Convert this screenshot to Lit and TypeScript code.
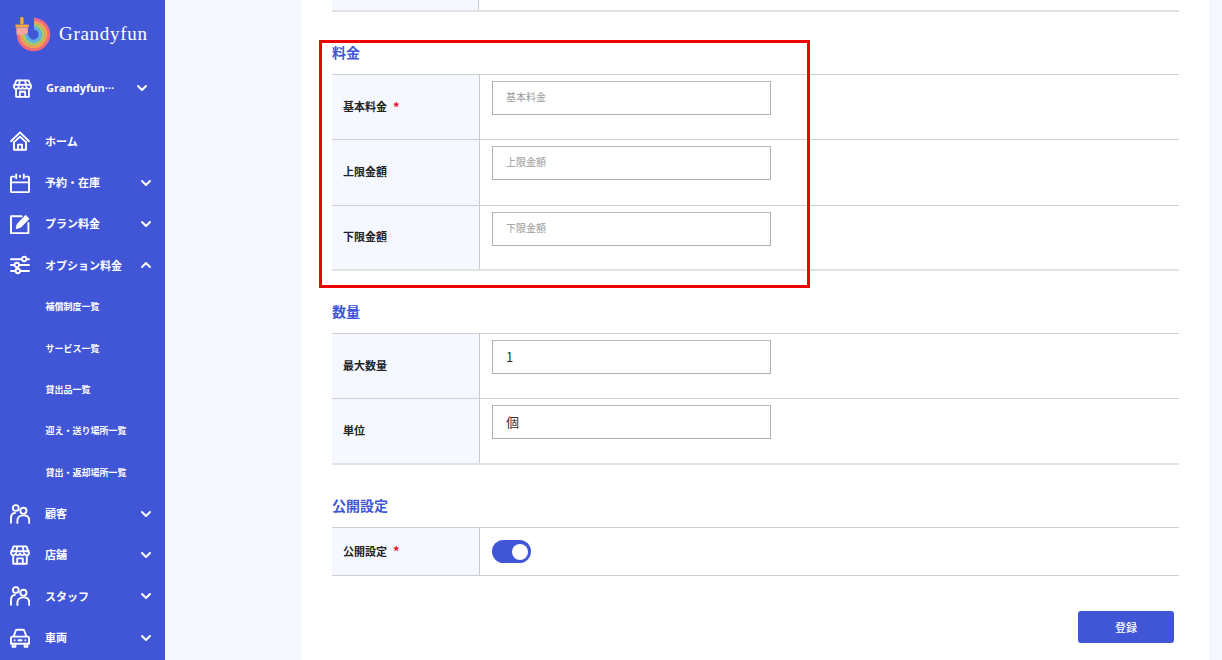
import { LitElement, html, css, svg } from "lit";
import { customElement } from "lit/decorators.js";

const stroke = (inner: unknown) => html`<svg class="ico" viewBox="0 0 20 20" fill="none" stroke="#fff" stroke-width="1.9" stroke-linecap="round" stroke-linejoin="round">${inner}</svg>`;

const icons: Record<string, unknown> = {
  home: stroke(svg`<path d="M1 10.200 10 1.400l9 8.800"/><path d="M3.800 11.400 10 5.600l6.200 5.800"/><path d="M4 11v7.800h12V11"/><path d="M8 18.800v-5.200h4v5.200"/>`),
  cal: stroke(svg`<path d="M4.400 3.600H2a1 1 0 0 0-1 1v13.600a1 1 0 0 0 1 1h16a1 1 0 0 0 1-1V4.600a1 1 0 0 0-1-1h-2.400"/><path d="M1 9.400h18M6.200 1.400v3.800M13.800 1.400v3.800M10 2.800v1.200"/>`),
  edit: stroke(svg`<path d="M11.600 2.200H1v17h17.400V9"/><path d="M6.400 14.400l1-4L15.600 1.800l3 3-8.400 8.400z" fill="#fff" stroke-width="1.300"/>`),
  opt: stroke(svg`<path d="M1 4.200h10.800M16.600 4.200H19M1 10h3.400M9.200 10H19M1 16h4.400M10.200 16H19"/><circle cx="14.200" cy="4" r="2.200"/><circle cx="6.800" cy="10" r="2.200"/><circle cx="7.800" cy="16" r="2.200"/>`),
  people: stroke(svg`<circle cx="5.800" cy="4" r="2.900"/><circle cx="13.400" cy="6.800" r="3.100"/><path d="M1 18.800v-4.600c0-3 1.500-5 4-5.300"/><path d="M7.400 19v-2.600c0-3 2.400-5 6-5s5.800 2 5.800 5V19"/>`),
  store: stroke(svg`<path d="M3.600 1.400h12.800L19 7.800c0 1.500-1 2.600-2.300 2.600-1.200 0-2.100-.8-2.400-1.800-.3 1-1.100 1.800-2.200 1.800-1 0-1.800-.8-2.100-1.800-.3 1-1.100 1.800-2.100 1.800-1.100 0-1.900-.8-2.200-1.800-.3 1-1.200 1.800-2.400 1.800C2 10.400 1 9.300 1 7.800z"/><path d="M1.400 6.200h17.200M7.200 1.600 6.300 7M12.800 1.600l.9 5.400"/><path d="M3.200 10.800v8h13.600v-8"/><path d="M7.200 18.800v-5.400h5.600v5.400"/>`),
  car: stroke(svg`<path d="M3.800 8.400 5.400 3.200c.2-.8.900-1.400 1.700-1.400h5.800c.8 0 1.500.6 1.700 1.400l1.600 5.200"/><path d="M2.200 8.600h15.600c.7 0 1.200.6 1.200 1.200v6H1V9.800c0-.6.500-1.200 1.200-1.200z"/><path d="M2.600 15.800v3h2.800v-3M14.600 15.800v3h2.800v-3M4.600 12.200h.1M8.400 12.200h3.200M15.300 12.200h.1"/>`),
};

const chev = (up = false) => html`<svg class="chev" viewBox="0 0 12 8" fill="none" stroke="#fff" stroke-width="2" stroke-linecap="round" stroke-linejoin="round"><path d="${up ? "M2 6l4-4 4 4" : "M2 2l4 4 4-4"}"/></svg>`;

type Nav = { icon?: string; label: string; chev?: "up" | "down"; sub?: boolean };
const nav: Nav[] = [
  { icon: "home", label: "ホーム" },
  { icon: "cal", label: "予約・在庫", chev: "down" },
  { icon: "edit", label: "プラン料金", chev: "down" },
  { icon: "opt", label: "オプション料金", chev: "up" },
  { label: "補償制度一覧", sub: true },
  { label: "サービス一覧", sub: true },
  { label: "貸出品一覧", sub: true },
  { label: "迎え・送り場所一覧", sub: true },
  { label: "貸出・返却場所一覧", sub: true },
  { icon: "people", label: "顧客", chev: "down" },
  { icon: "store", label: "店舗", chev: "down" },
  { icon: "people", label: "スタッフ", chev: "down" },
  { icon: "car", label: "車両", chev: "down" },
];

@customElement("app-root")
export class AppRoot extends LitElement {
  static styles = css`
    :host { display: block; width: 1222px; height: 660px; overflow: hidden; background: #f5f8ff; font-family: "Noto Sans CJK JP", "Noto Sans", sans-serif; color: #222; }
    .page { display: flex; height: 660px; }
    .side { width: 165px; flex: none; background: #4056d6; color: #fff; overflow: hidden; }
    .logo { height: 68px; display: flex; align-items: flex-start; }
    .logo svg { width: 38px; height: 38px; margin: 16px 0 0 15px; flex: none; }
    .logo span { font: 19px/1 "Liberation Serif", serif; letter-spacing: .7px; color: #fff; margin: 24px 0 0 6px; }
    .shop { height: 40px; display: flex; align-items: center; padding-left: 13px; }
    .shop .ico { width: 19px; height: 19px; }
    .shop b { font: 700 11px/1.3 "Open Sans", sans-serif; margin-left: 14px; width: 72px; white-space: nowrap; }
    .shop .chev { margin-left: 18px; }
    .nav { margin-top: 12.6px; }
    .item { height: 41.37px; display: flex; align-items: center; padding-left: 9.5px; position: relative; }
    .item .ico { width: 20px; height: 20px; flex: none; }
    .item span { font-size: 11px; font-weight: 700; margin-left: 15.5px; line-height: 1; flex: 1; white-space: nowrap; }
    .item.sub span { font-size: 9px; margin-left: 36px; }
    .chev { width: 12px; height: 8px; flex: none; }
    .item .chev { margin-right: 13px; }
    .main { flex: 1; padding: 0 13px 0 136px; min-width: 0; }
    .card { background: #fff; height: 660px; padding: 0 30px 0 31px; }
    .stub { display: grid; grid-template-columns: 147px 1fr; height: 12px; border-bottom: 2px solid #e2e2e2; box-sizing: border-box; }
    .stub i { background: #f5f8ff; border-right: 1px solid #c8c8c8; }
    h2 { margin: 0; font-size: 14px; font-weight: 700; color: #4056d6; line-height: 20px; }
    .t1 { padding: 30px 0 12px; }
    .t2 { padding: 30.25px 0 12px; }
    .t3 { padding: 30.5px 0 12px; }
    .table { border-top: 1px solid #cfcfcf; }
    .row { display: grid; grid-template-columns: 148px 1fr; height: 65.25px; box-sizing: border-box; border-bottom: 1px solid #cfcfcf; }
    .row.last { border-bottom: 2px solid #e2e2e2; }
    .row.short { height: 48px; border-bottom: 1px solid #cfcfcf; }
    .th { background: #f5f8ff; border-right: 1px solid #c8c8c8; display: flex; align-items: center; padding: 0 0 2px 11px; font-size: 11px; font-weight: 700; color: #222; }
    .req { color: #e8112d; margin-left: 6px; font-size: 13px; line-height: 1; }
    .td { padding: 6px 0 0 12px; }
    input { display: block; width: 279px; height: 34px; box-sizing: border-box; border: 1px solid #b0b0b0; border-top-color: #b8b8b8; background: #fff; padding: 0 13px 2px; font: 13px "Noto Sans CJK JP", sans-serif; color: #333; outline: none; border-radius: 0; }
    input.empty { padding-bottom: 5px; }
    input::placeholder { color: #9a9a9a; font-size: 10px; }
    .tdt { display: flex; align-items: center; padding-left: 12px; }
    .toggle { width: 39px; height: 23px; border-radius: 12px; background: #4056d6; display: flex; align-items: center; justify-content: flex-end; padding-right: 3px; box-sizing: border-box; }
    .toggle i { width: 16px; height: 16px; border-radius: 50%; background: #fff; }
    .actions { display: flex; justify-content: flex-end; padding: 35px 5px 0 0; }
    button { width: 96px; height: 32px; border: 0; border-radius: 3px; background: #4056d6; color: #fff; font: 500 11px "Noto Sans CJK JP", sans-serif; }
    .mark { position: absolute; left: 319px; top: 40px; width: 491px; height: 248px; border: 3px solid #f00000; box-sizing: border-box; pointer-events: none; }
  `;

  private row(label: string, opts: { ph?: string; val?: string; req?: boolean; last?: boolean }) {
    return html`<div class="row ${opts.last ? "last" : ""}">
      <div class="th">${label}${opts.req ? html`<span class="req">*</span>` : ""}</div>
      <div class="td"><input class="${opts.ph ? "empty" : ""}" .value=${opts.val ?? ""} placeholder=${opts.ph ?? ""} /></div>
    </div>`;
  }

  render() {
    return html`<div class="page">
      <aside class="side">
        <div class="logo">
          <svg viewBox="0 0 40 40" fill="none">
            <g stroke-width="3.200">
              <path d="M20 3.500A16 16 0 1 1 3.500 19.500" stroke="#f2687c" />
              <path d="M20 6.500A13 13 0 1 1 6.500 19.500" stroke="#f6a04e" />
              <path d="M20 9.500A10 10 0 1 1 9.500 19.500" stroke="#a6c96a" />
              <path d="M20 12.500A7 7 0 1 1 12.500 19.500" stroke="#5db4e4" />
            </g>
            <rect x="5.500" y="1" width="3.500" height="8" rx="1.500" fill="#f5a83f" />
            <rect x="0.500" y="9" width="14" height="3" fill="#f5a83f" />
            <path d="M1.500 12h12v6.500l-6 2-6-1z" fill="#f5a79c" />
          </svg>
          <span>Grandyfun</span>
        </div>
        <div class="shop">${icons.store}<b>Grandyfun···</b>${chev()}</div>
        <div class="nav">
          ${nav.map(
            (n) => html`<div class="item ${n.sub ? "sub" : ""}">
              ${n.icon ? icons[n.icon] : ""}
              <span>${n.label}</span>
              ${n.chev ? chev(n.chev === "up") : ""}
            </div>`
          )}
        </div>
      </aside>
      <main class="main">
        <div class="card">
          <div class="stub"><i></i><span></span></div>
          <h2 class="t1">料金</h2>
          <div class="table">
            ${this.row("基本料金", { ph: "基本料金", req: true })}
            ${this.row("上限金額", { ph: "上限金額" })}
            ${this.row("下限金額", { ph: "下限金額", last: true })}
          </div>
          <h2 class="t2">数量</h2>
          <div class="table">
            ${this.row("最大数量", { val: "1" })}
            ${this.row("単位", { val: "個", last: true })}
          </div>
          <h2 class="t3">公開設定</h2>
          <div class="table">
            <div class="row short">
              <div class="th">公開設定<span class="req">*</span></div>
              <div class="tdt"><div class="toggle"><i></i></div></div>
            </div>
          </div>
          <div class="actions"><button>登録</button></div>
        </div>
      </main>
      <div class="mark"></div>
    </div>`;
  }
}
